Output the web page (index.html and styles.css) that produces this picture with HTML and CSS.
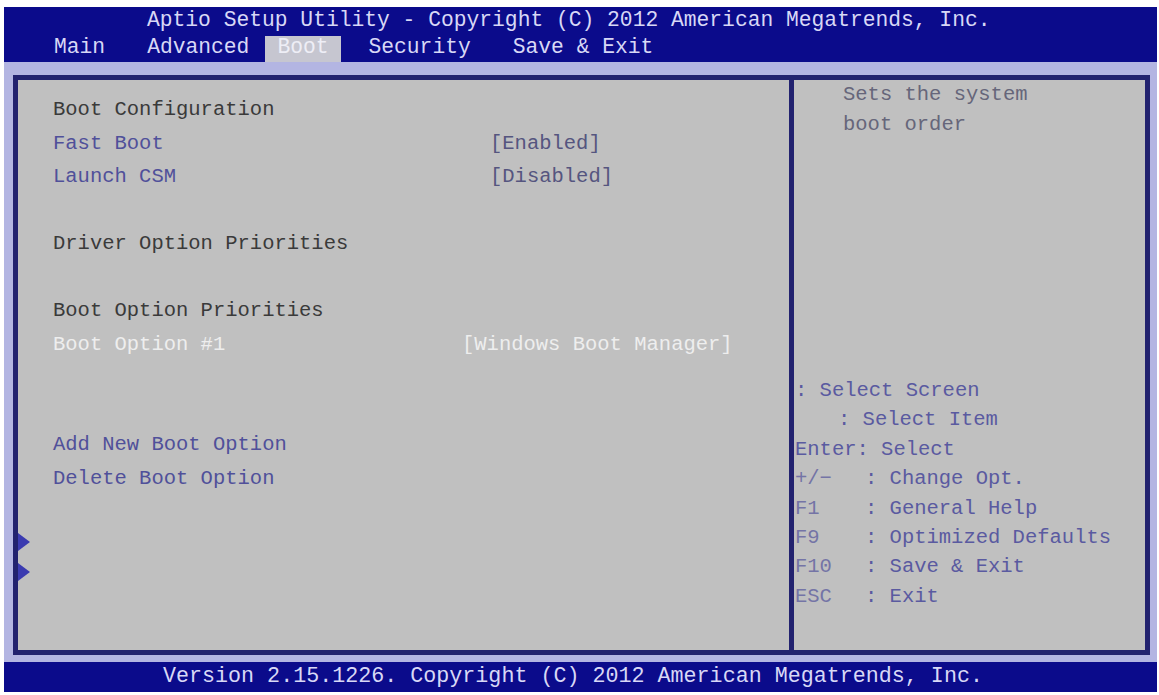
FILE: index.html
```html
<!DOCTYPE html>
<html lang="en">
<head>
    <meta charset="UTF-8">
    <title>Aptio Setup Utility</title>
    <link rel="stylesheet" href="styles.css">
</head>
<body>
    <div class="screen">
        <div class="header">
            <div class="title">Aptio Setup Utility - Copyright (C) 2012 American Megatrends, Inc.</div>
            <div class="menu">
                <span class="menu-item">Main</span>
                <span class="menu-item">Advanced</span>
                <span class="menu-item active">Boot</span>
                <span class="menu-item">Security</span>
                <span class="menu-item">Save &amp; Exit</span>
            </div>
        </div>

        <div class="body">
            <div class="frame">
                <div class="left-panel">
                    <div class="row heading">Boot Configuration</div>
                    <div class="row option">
                        <span class="label">Fast Boot</span>
                        <span class="value">[Enabled]</span>
                    </div>
                    <div class="row option">
                        <span class="label">Launch CSM</span>
                        <span class="value">[Disabled]</span>
                    </div>
                    <div class="row"></div>
                    <div class="row heading">Driver Option Priorities</div>
                    <div class="row"></div>
                    <div class="row heading">Boot Option Priorities</div>
                    <div class="row selected">
                        <span class="label">Boot Option #1</span>
                        <span class="value wide">[Windows Boot Manager]</span>
                    </div>
                    <div class="row"></div>
                    <div class="row"></div>
                    <div class="row option">Add New Boot Option</div>
                    <div class="row option">Delete Boot Option</div>

                    <div class="scroll-marks">
                        <div class="mark"></div>
                        <div class="mark"></div>
                    </div>
                </div>

                <div class="divider"></div>

                <div class="right-panel">
                    <div class="help">
                        <div>Sets the system</div>
                        <div>boot order</div>
                    </div>
                    <div class="keys">
                        <div class="key-line">: Select Screen</div>
                        <div class="key-line indent">: Select Item</div>
                        <div class="key-line">Enter: Select</div>
                        <div class="key-line"><span class="key">+/&minus;</span>: Change Opt.</div>
                        <div class="key-line"><span class="key">F1</span>: General Help</div>
                        <div class="key-line"><span class="key">F9</span>: Optimized Defaults</div>
                        <div class="key-line"><span class="key">F10</span>: Save &amp; Exit</div>
                        <div class="key-line"><span class="key">ESC</span>: Exit</div>
                    </div>
                </div>
            </div>
        </div>

        <div class="footer">Version 2.15.1226. Copyright (C) 2012 American Megatrends, Inc.</div>
    </div>
</body>
</html>
```

FILE: styles.css
```css
body {
    margin: 0;
    background-color: #fff;
    font-family: "Liberation Mono", "Courier New", monospace;
}

.screen {
    margin: 7px 2px 0 4px;
    width: 1153px;
    height: 685px;
    display: flex;
    flex-direction: column;
    background-color: #b3b5e2;
}

/* Top blue bar */
.header {
    height: 55px;
    background-color: #0b0b8b;
    color: #d8d8f6;
}

.title {
    height: 27px;
    line-height: 27px;
    padding-left: 143px;
    font-size: 21.3px;
    white-space: pre;
}

.menu {
    display: flex;
    height: 28px;
    align-items: flex-end;
    padding-left: 50px;
}

.menu-item {
    padding-bottom: 4px;
    line-height: 22px;
    font-size: 21.3px;
    white-space: pre;
}

.menu-item + .menu-item {
    margin-left: 42px;
}

.menu-item.active {
    margin-left: 16px;
    padding: 0 12px 4px;
    background-color: #c6c6d0;
    color: #eeeef6;
}

.menu-item.active + .menu-item {
    margin-left: 28px;
}

/* Middle area */
.body {
    flex: 1;
    padding: 13px 7px 7px 9px;
    display: flex;
}

.frame {
    flex: 1;
    display: flex;
    border: 5px solid #22226f;
    background-color: #c0c0c0;
}

.left-panel {
    width: 771px;
    padding-top: 13px;
    font-size: 20.5px;
}

.row {
    display: flex;
    height: 33.5px;
    align-items: center;
    padding-left: 35px;
    white-space: pre;
}

.heading {
    color: #3a3a3a;
}

.option {
    color: #50509a;
}

.option .value {
    color: #55557f;
}

.selected {
    color: #eeeeee;
}

.label {
    width: 437px;
}

.value.wide {
    margin-left: -28px;
}

.scroll-marks {
    margin-top: 38px;
}

.mark {
    width: 0;
    height: 0;
    border-left: 12px solid #3b3bb0;
    border-top: 9px solid transparent;
    border-bottom: 9px solid transparent;
    margin-bottom: 12px;
}

.divider {
    width: 5px;
    background-color: #22226f;
}

.right-panel {
    flex: 1;
    display: flex;
    flex-direction: column;
    font-size: 20.5px;
}

.help {
    padding-left: 49px;
    line-height: 30px;
    color: #66667a;
}

.keys {
    margin-top: auto;
    padding-bottom: 39px;
    padding-left: 1px;
    color: #5a5aa0;
}

.key-line {
    display: flex;
    height: 29.4px;
    align-items: center;
    white-space: pre;
}

.key-line.indent {
    padding-left: 43px;
}

.key {
    width: 70px;
    color: #7474a6;
}

/* Bottom blue bar */
.footer {
    height: 30px;
    line-height: 30px;
    padding-left: 159px;
    background-color: #0b0b8b;
    color: #d8d8f6;
    font-size: 21.7px;
    white-space: pre;
}
```
